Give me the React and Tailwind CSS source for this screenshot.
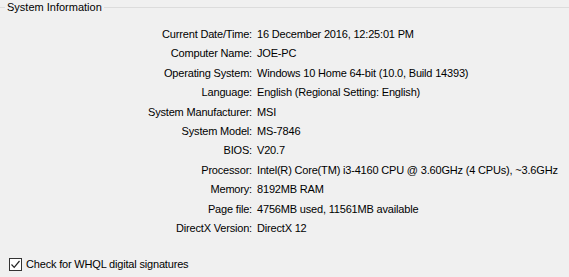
const rows = [
  ["Current Date/Time:", "16 December 2016, 12:25:01 PM"],
  ["Computer Name:", "JOE-PC"],
  ["Operating System:", "Windows 10 Home 64-bit (10.0, Build 14393)"],
  ["Language:", "English (Regional Setting: English)"],
  ["System Manufacturer:", "MSI"],
  ["System Model:", "MS-7846"],
  ["BIOS:", "V20.7"],
  ["Processor:", "Intel(R) Core(TM) i3-4160 CPU @ 3.60GHz (4 CPUs), ~3.6GHz"],
  ["Memory:", "8192MB RAM"],
  ["Page file:", "4756MB used, 11561MB available"],
  ["DirectX Version:", "DirectX 12"],
];

export default function App() {
  return (
    <div className="w-[569px] h-[277px] bg-[#f0f0f0] text-[#000] text-[11px] tracking-[-0.18px] font-['Liberation_Sans',sans-serif] overflow-hidden">
      <div className="flex items-center h-[15px]">
        <div className="w-[5px] h-px bg-[#dcdcdc]" />
        <span className="px-[2px] leading-[15px] tracking-[0px]">System Information</span>
        <div className="flex-1 h-px bg-[#dcdcdc]" />
      </div>
      <div className="grid grid-cols-[252px_1fr] gap-x-[5px] mt-[10px]">
        {rows.map(([label, value]) => (
          <div key={label} className="contents">
            <div className="text-right leading-[19.4px] whitespace-nowrap">{label}</div>
            <div className="leading-[19.4px] whitespace-nowrap">{value}</div>
          </div>
        ))}
      </div>
      <div className="flex items-center gap-[4px] pl-[9px] mt-[19px]">
        <div className="w-[13px] h-[13px] border border-[#333] bg-white flex items-center justify-center">
          <svg width="11" height="11" viewBox="0 0 11 11">
            <path d="M1.5 5.5 L4.2 8.3 L9.5 2" fill="none" stroke="#222" strokeWidth="1.2" />
          </svg>
        </div>
        <span className="leading-[15px]">Check for WHQL digital signatures</span>
      </div>
    </div>
  );
}
